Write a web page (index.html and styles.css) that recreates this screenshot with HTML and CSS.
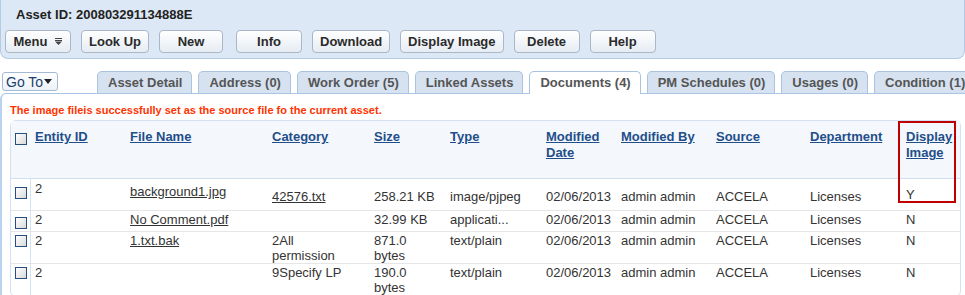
FILE: index.html
```html
<!DOCTYPE html>
<html lang="en">
<head>
    <meta charset="UTF-8">
    <title>Asset 200803291134888E - Documents</title>
    <link rel="stylesheet" href="styles.css">
</head>
<body>
    <div class="asset-bar">
        <h1 class="asset-title">Asset ID: 200803291134888E</h1>
        <div class="toolbar">
            <button class="btn btn-menu">Menu
                <svg class="menu-icon" width="7" height="7" viewBox="0 0 7 7"><rect x="0" y="0" width="7" height="1"/><rect x="0" y="2" width="7" height="1"/><polygon points="0,3.5 7,3.5 3.5,7"/></svg>
            </button>
            <button class="btn">Look Up</button>
            <button class="btn btn-narrow">New</button>
            <button class="btn">Info</button>
            <button class="btn">Download</button>
            <button class="btn">Display Image</button>
            <button class="btn">Delete</button>
            <button class="btn">Help</button>
        </div>
    </div>

    <div class="tab-row">
        <button class="goto">Go To<svg width="8" height="5" viewBox="0 0 8 5"><polygon points="0,0 8,0 4,5"/></svg></button>
        <ul class="tabs">
            <li class="tab">Asset Detail</li>
            <li class="tab">Address (0)</li>
            <li class="tab">Work Order (5)</li>
            <li class="tab">Linked Assets</li>
            <li class="tab active">Documents (4)</li>
            <li class="tab">PM Schedules (0)</li>
            <li class="tab">Usages (0)</li>
            <li class="tab">Condition (1)</li>
        </ul>
    </div>

    <div class="panel">
        <p class="notice">The image fileis successfully set as the source file fo the current asset.</p>

        <div class="grid-box">
            <table class="docs">
                <colgroup>
                    <col style="width:20px">
                    <col style="width:95px">
                    <col style="width:142px">
                    <col style="width:102px">
                    <col style="width:76px">
                    <col style="width:96px">
                    <col style="width:75px">
                    <col style="width:95px">
                    <col style="width:94px">
                    <col style="width:96px">
                    <col style="width:58px">
                </colgroup>
                <thead>
                    <tr class="head">
                        <th class="cb"><span class="check"></span></th>
                        <th><a href="#">Entity ID</a></th>
                        <th><a href="#">File Name</a></th>
                        <th><a href="#">Category</a></th>
                        <th><a href="#">Size</a></th>
                        <th><a href="#">Type</a></th>
                        <th><a href="#">Modified Date</a></th>
                        <th><a href="#">Modified By</a></th>
                        <th><a href="#">Source</a></th>
                        <th><a href="#">Department</a></th>
                        <th><a href="#">Display Image</a></th>
                    </tr>
                </thead>
                <tbody>
                    <tr class="row-first">
                        <td class="cb"><span class="check"></span></td>
                        <td class="id">2</td>
                        <td class="file"><a href="#">background1.jpg</a></td>
                        <td class="cat"><a href="#">42576.txt</a></td>
                        <td>258.21 KB</td>
                        <td>image/pjpeg</td>
                        <td>02/06/2013</td>
                        <td>admin admin</td>
                        <td>ACCELA</td>
                        <td>Licenses</td>
                        <td class="flag">Y</td>
                    </tr>
                    <tr class="row-pdf">
                        <td class="cb"><span class="check"></span></td>
                        <td>2</td>
                        <td><a href="#">No Comment.pdf</a></td>
                        <td></td>
                        <td>32.99 KB</td>
                        <td>applicati...</td>
                        <td>02/06/2013</td>
                        <td>admin admin</td>
                        <td>ACCELA</td>
                        <td>Licenses</td>
                        <td>N</td>
                    </tr>
                    <tr class="row-tall">
                        <td class="cb"><span class="check"></span></td>
                        <td>2</td>
                        <td><a href="#">1.txt.bak</a></td>
                        <td>2All<br>permission</td>
                        <td>871.0<br>bytes</td>
                        <td>text/plain</td>
                        <td>02/06/2013</td>
                        <td>admin admin</td>
                        <td>ACCELA</td>
                        <td>Licenses</td>
                        <td>N</td>
                    </tr>
                    <tr class="row-tall">
                        <td class="cb"><span class="check"></span></td>
                        <td>2</td>
                        <td></td>
                        <td>9Specify LP</td>
                        <td>190.0<br>bytes</td>
                        <td>text/plain</td>
                        <td>02/06/2013</td>
                        <td>admin admin</td>
                        <td>ACCELA</td>
                        <td>Licenses</td>
                        <td>N</td>
                    </tr>
                </tbody>
            </table>
            <div class="highlight"></div>
        </div>
    </div>
</body>
</html>
```

FILE: styles.css
```css
body {
    margin: 0;
    font-family: "Liberation Sans", Arial, sans-serif;
    font-size: 13px;
    color: #333;
    background: #fff;
    overflow-x: hidden;
}
.asset-bar {
    background: #dce8f5;
    border: 1px solid #b3cbe6;
    border-top: none;
    border-radius: 0 0 8px 8px;
    padding: 7px 4px 5px;
}
.asset-title {
    margin: 0 0 7px 11px;
    font-size: 13px;
    line-height: 16px;
    font-weight: bold;
    color: #222;
}
.toolbar {
    display: flex;
    gap: 10px;
}
.btn {
    display: flex;
    align-items: center;
    justify-content: center;
    gap: 8px;
    height: 23px;
    min-width: 66px;
    padding: 0 7px;
    border: 1px solid #a9b7c8;
    border-radius: 4px;
    background: linear-gradient(#ffffff, #e6ecf3);
    font: bold 13px "Liberation Sans", Arial, sans-serif;
    color: #2b2b2b;
    cursor: pointer;
}
.btn-narrow {
    min-width: 64px;
    margin-right: 3px;
}
.menu-icon {
    fill: #444;
}
.tab-row {
    display: flex;
    align-items: flex-end;
    margin-top: 12px;
    padding-left: 2px;
}
.goto {
    display: flex;
    align-items: center;
    gap: 1px;
    width: 56px;
    height: 19px;
    margin: 0 39px 2px 0;
    padding: 0 0 0 3px;
    border: 1px solid #a3b9d4;
    border-radius: 3px;
    background: linear-gradient(#ffffff, #edf2f8);
    font: 14px "Liberation Sans", Arial, sans-serif;
    color: #1b3e70;
    flex-shrink: 0;
}
.goto svg {
    fill: #222;
}
.tabs {
    display: flex;
    gap: 6px;
    margin: 0;
    padding: 0;
    list-style: none;
}
.tab {
    flex-shrink: 0;
    height: 21px;
    line-height: 21px;
    padding: 0 9px 0 10px;
    border: 1px solid #a9c3e0;
    border-bottom: none;
    border-radius: 5px 5px 0 0;
    background: #d6e2f0;
    color: #555;
    font-weight: bold;
    white-space: nowrap;
}
.tab.active {
    position: relative;
    height: 22px;
    margin-bottom: -1px;
    background: #fff;
}
.panel {
    border-top: 1px solid #a9c5e5;
    border-left: 2px solid #b9d3ef;
    border-top-left-radius: 6px;
    padding: 10px 0 0 8px;
}
.notice {
    margin: 0 0 3px;
    font-size: 11px;
    line-height: 13px;
    font-weight: bold;
    color: #ff3300;
}
.grid-box {
    position: relative;
    width: 949px;
    border: 1px solid #d3e2f2;
    border-radius: 6px;
}
.docs {
    width: 949px;
    table-layout: fixed;
    border-collapse: separate;
    border-spacing: 0;
}
.docs th {
    text-align: left;
    vertical-align: top;
    padding: 8px 4px 0;
    line-height: 16px;
    font-weight: bold;
    background: #f4f8fc;
    border-bottom: 1px solid #d0e0f0;
}
.docs th a {
    color: #1f4e8a;
}
.docs tr.head {
    height: 58px;
}
.docs td {
    vertical-align: top;
    padding: 1px 4px 0;
    line-height: 15px;
    border-bottom: 1px solid #e6e6e6;
    white-space: nowrap;
}
.docs td a {
    color: #333;
}
.docs td.cb {
    border-right: 1px solid #d4e3f3;
    padding-top: 3px;
}
.docs th.cb {
    padding-top: 12px;
}
.check {
    display: block;
    width: 10px;
    height: 10px;
    border: 1px solid #24507f;
    background: linear-gradient(135deg, #ffffff, #d9d9d9);
}
.row-first {
    height: 32px;
}
.row-first td {
    padding-top: 10px;
}
.row-first td.cb {
    padding-top: 8px;
}
.row-first td.id {
    padding-top: 2px;
}
.row-first td.file {
    padding-top: 5px;
}
.row-first td.cat {
    padding-top: 10px;
}
.row-first td.flag {
    padding-top: 8px;
}
.row-pdf {
    height: 21px;
}
.row-pdf td.cb {
    padding-top: 6px;
}
.row-tall {
    height: 31px;
}
.highlight {
    position: absolute;
    left: 887px;
    top: 0;
    width: 54px;
    height: 78px;
    border: 2px solid #c00000;
}
```
